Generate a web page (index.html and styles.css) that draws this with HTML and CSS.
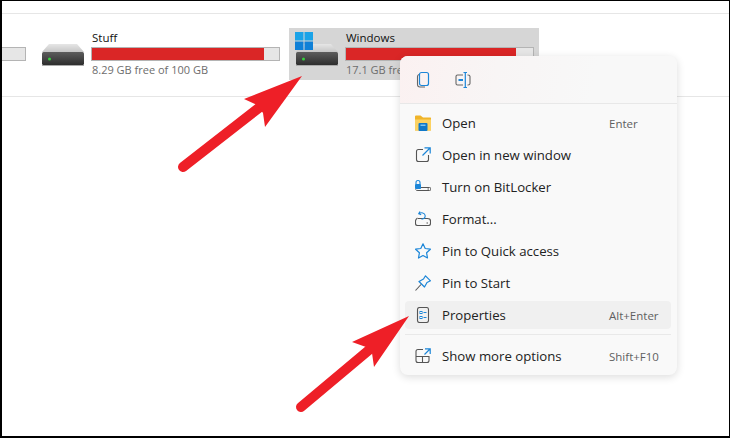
FILE: index.html
```html
<!DOCTYPE html>
<html>
  <head>
    <title>This PC</title>
    <link rel="stylesheet" href="styles.css">
  </head>
  <body>
    <div class="page">
      <div class="drives">
        <div class="cut-tile"><div class="bar"></div></div>

        <div class="tile">
          <svg class="drive-icon" width="42" height="22" viewBox="0 0 42 22">
            <use href="#drive"></use>
          </svg>
          <div class="info">
            <div class="name">Stuff</div>
            <div class="bar"><div class="used" style="width: 92%"></div></div>
            <div class="free">8.29 GB free of 100 GB</div>
          </div>
        </div>

        <div class="tile selected">
          <svg class="win-logo" width="18" height="18" viewBox="0 0 18 18">
            <rect width="8.5" height="8.5" fill="#1aa3e8"></rect>
            <rect x="9.5" width="8.5" height="8.5" fill="#1aa3e8"></rect>
            <rect y="9.5" width="8.5" height="8.5" fill="#0f80d7"></rect>
            <rect x="9.5" y="9.5" width="8.5" height="8.5" fill="#0f80d7"></rect>
          </svg>
          <svg class="drive-icon" width="42" height="22" viewBox="0 0 42 22">
            <use href="#drive"></use>
          </svg>
          <div class="info">
            <div class="name">Windows</div>
            <div class="bar"><div class="used" style="width: 91%"></div></div>
            <div class="free">17.1 GB free of 100 GB</div>
          </div>
        </div>
      </div>

      <div class="menu">
        <div class="menu-tools">
          <svg width="20" height="20" viewBox="0 0 20 20" fill="none">
            <path d="M6 4.5c-1 .3-1.500 1-1.500 2v8c0 1.600 1 2.500 2.500 2.500h5" stroke="#666" stroke-width="1.100"></path>
            <rect x="6.500" y="2.500" width="9" height="13" rx="2" stroke="#1c86d8" stroke-width="1.200"></rect>
          </svg>
          <svg width="20" height="20" viewBox="0 0 20 20" fill="none">
            <path d="M10 5H4.500Q3 5 3 6.500v7Q3 15 4.500 15H10M14.500 5h.5Q17 5 17 6.500v7q0 1.500-2 1.500h-.5" stroke="#666" stroke-width="1.100"></path>
            <path d="M5.500 10H10" stroke="#1c86d8" stroke-width="2"></path>
            <path d="M10.500 2.500h3.500M10.500 17.500h3.500M12.300 2.500v15" stroke="#1c86d8" stroke-width="1.200"></path>
          </svg>
        </div>

        <div class="menu-list">
          <div class="item">
            <svg width="16" height="16" viewBox="0 0 16 16">
              <path d="M0 1.500Q0 .5 1 .5h4.500L8 2.500h7.500q.5 0 .5.500V15.500H0z" fill="#f0b429"></path>
              <path d="M0 4.500h16v10q0 1-1 1H1q-1 0-1-1z" fill="#fcd262"></path>
              <rect x="3.500" y="8" width="9" height="8" rx="1" fill="#0f78c9"></rect>
              <rect x="5.500" y="9.500" width="5" height="1.500" fill="#7cc4f2"></rect>
            </svg>
            <span class="label">Open</span>
            <span class="keys">Enter</span>
          </div>
          <div class="item">
            <svg width="16" height="16" viewBox="0 0 16 16" fill="none">
              <path d="M8 2.500H3.500q-2 0-2 2v8q0 2 2 2h8q2 0 2-2V8" stroke="#555" stroke-width="1.100"></path>
              <path d="M9.500 .8h5.700v5.700M15 1L7.500 8.500" stroke="#1c86d8" stroke-width="1.200"></path>
            </svg>
            <span class="label">Open in new window</span>
          </div>
          <div class="item">
            <svg width="16" height="16" viewBox="0 0 16 16" fill="none">
              <path d="M1 5V3.500a2 2 0 0 1 4 0V5" stroke="#1c86d8" stroke-width="1.100"></path>
              <rect x="0" y="5" width="6" height="5" rx=".8" fill="#1c86d8"></rect>
              <path d="M6 8.500h8.500q1.500 0 1.500 1.500t-1.500 1.500H3q-2 0-2.500-1" stroke="#555" stroke-width="1"></path>
              <path d="M12.500 10h1.500" stroke="#555"></path>
            </svg>
            <span class="label">Turn on BitLocker</span>
          </div>
          <div class="item">
            <svg width="16" height="16" viewBox="0 0 16 16" fill="none">
              <path d="M3 7.500h9.500q3 0 3 2.500v2.500q0 2-2 2H2.500q-2 0-2-2V10q0-1.500 2-3" stroke="#555" stroke-width="1.100"></path>
              <path d="M5 .5 3.700 2.800l2.500 1M4 2.600c2-1.500 6-1 6.200 2.200.1 2-1.500 3.200-3.700 3.500" stroke="#1c86d8" stroke-width="1.100"></path>
              <path d="M11.500 12h1.500" stroke="#555"></path>
            </svg>
            <span class="label">Format...</span>
          </div>
          <div class="item">
            <svg width="16" height="16" viewBox="0 0 16 16" fill="none">
              <path d="M8 .8 10.200 5.500l5.200.7-3.800 3.600.9 5.200L8 12.500l-4.500 2.500.9-5.200L.6 6.200l5.200-.7z" stroke="#1c86d8" stroke-width="1.200" stroke-linejoin="round"></path>
            </svg>
            <span class="label">Pin to Quick access</span>
          </div>
          <div class="item">
            <svg width="16" height="16" viewBox="0 0 16 16" fill="none">
              <path d="M10.500 .8 15.500 5.800l-3.500 1.700-2.500 4.500-5.500-5.500 4.500-2.500z" stroke="#1c86d8" stroke-width="1.200" stroke-linejoin="round"></path>
              <path d="M6 9.500.5 15.500" stroke="#555" stroke-width="1.100"></path>
            </svg>
            <span class="label">Pin to Start</span>
          </div>
          <div class="item active">
            <svg width="16" height="16" viewBox="0 0 16 16" fill="none">
              <rect x="2.500" y=".5" width="11" height="15" rx="2" stroke="#555" stroke-width="1.100"></rect>
              <rect x="5" y="4.500" width="2" height="2" stroke="#1c86d8"></rect>
              <rect x="5" y="9.500" width="2" height="2" stroke="#1c86d8"></rect>
              <path d="M8.500 5.500h3M8.500 10.500h3" stroke="#1c86d8"></path>
            </svg>
            <span class="label">Properties</span>
            <span class="keys">Alt+Enter</span>
          </div>
          <div class="menu-sep"></div>
          <div class="item">
            <svg width="16" height="16" viewBox="0 0 16 16" fill="none">
              <path d="M8 1.500H3q-2 0-2 2v9q0 2 2 2h9q2 0 2-2V8.500H7.500v6M1 8.500h6.500" stroke="#555" stroke-width="1.100"></path>
              <path d="M10 .8h5.200V6M15 1 9.500 6.500" stroke="#1c86d8" stroke-width="1.200"></path>
            </svg>
            <span class="label">Show more options</span>
            <span class="keys">Shift+F10</span>
          </div>
        </div>
      </div>

      <svg class="arrows" width="730" height="438" viewBox="0 0 730 438">
        <path d="M183 167 260 107" stroke="#ee1f27" stroke-width="10" stroke-linecap="round"></path>
        <polygon points="302,76 244,99 257,105 263,113 265,127" fill="#ee1f27"></polygon>
        <path d="M301 407 369 350" stroke="#ee1f27" stroke-width="10" stroke-linecap="round"></path>
        <polygon points="409,316 352,342 366,347 372,353 374,367" fill="#ee1f27"></polygon>
      </svg>

      <svg width="0" height="0" class="defs">
        <defs>
          <linearGradient id="drive-top" x1="0" y1="0" x2="0" y2="1">
            <stop offset="0" stop-color="#e6e6e6"></stop>
            <stop offset="1" stop-color="#c6c6c6"></stop>
          </linearGradient>
          <linearGradient id="drive-body" x1="0" y1="0" x2="0" y2="1">
            <stop offset="0" stop-color="#5c5c5c"></stop>
            <stop offset="1" stop-color="#2e2e2e"></stop>
          </linearGradient>
          <g id="drive">
            <polygon points="7,0 35,0 42,8 0,8" fill="url(#drive-top)"></polygon>
            <rect x="0" y="8" width="42" height="13" rx="1.500" fill="url(#drive-body)"></rect>
            <rect x="0" y="21" width="42" height="1" fill="#aaa"></rect>
            <rect x="6" y="13.500" width="3" height="3" rx="1.500" fill="#35d13c"></rect>
          </g>
        </defs>
      </svg>
    </div>
  </body>
</html>
```

FILE: styles.css
```css
* {
  box-sizing: border-box;
}

body {
  margin: 0;
  background-color: #fff;
}

.page {
  position: relative;
  width: 730px;
  height: 438px;
  overflow: hidden;
  background-color: #fff;
  border: solid #000;
  border-width: 1px 1px 2px 2px;
  font-family: "Open Sans", "Noto Sans", sans-serif;
  color: #1b1b1b;
}

.defs {
  position: absolute;
}

.drives {
  display: flex;
  margin-top: 12px;
  padding-top: 14px;
  height: 84px;
  border-top: 1px solid #e6e6e6;
  border-bottom: 1px solid #e6e6e6;
}

.cut-tile {
  width: 24px;
  margin-right: 9px;
  padding-top: 19px;
}

.cut-tile .bar {
  border-left: none;
}

.tile {
  position: relative;
  display: flex;
  width: 250px;
  height: 52px;
  margin-right: 4px;
  padding-left: 7px;
}

.tile.selected {
  background-color: #d6d6d6;
}

.drive-icon {
  flex: none;
  margin-top: 16px;
}

.win-logo {
  position: absolute;
  left: 6px;
  top: 4px;
}

.info {
  width: 189px;
  margin-left: 7px;
}

.name {
  height: 19px;
  padding: 2px 0 0 1px;
  font-size: 11.500px;
  line-height: 15px;
  color: #111;
}

.bar {
  height: 14px;
  background-color: #e6e6e6;
  border: 1px solid #b4b4b4;
}

.used {
  height: 100%;
  background-color: #da2626;
}

.free {
  padding: 1px 0 0 1px;
  font-size: 11px;
  line-height: 15px;
  color: #6d6d6d;
}

.menu {
  position: absolute;
  left: 398px;
  top: 55px;
  width: 277px;
  height: 319px;
  background-color: #f9f9f9;
  border-radius: 8px;
  box-shadow: 0 2px 8px rgba(0, 0, 0, 0.14);
}

.menu-tools {
  display: flex;
  gap: 20px;
  height: 48px;
  padding: 14px 0 0 13px;
  border-bottom: 1px solid #e8e8e8;
  border-radius: 8px 8px 0 0;
  background: linear-gradient(100deg, #fbf1f1, #f8f5f5 35%, #f8f8f8 70%);
}

.menu-list {
  padding: 3px 6px 0 5px;
}

.item {
  display: flex;
  align-items: center;
  height: 32px;
  padding-left: 10px;
  border-radius: 4px;
  font-size: 13.200px;
  color: #222;
}

.item svg {
  flex: none;
}

.item.active {
  height: 28px;
  margin: 2px 0;
  background-color: #f0f0f0;
}

.label {
  margin-left: 11px;
}

.keys {
  position: absolute;
  left: 209px;
  font-size: 11.500px;
  color: #5f5f5f;
}

.menu-sep {
  height: 1px;
  margin: 5px 0;
  background-color: #e9e9e9;
}

.arrows {
  position: absolute;
  left: -2px;
  top: -1px;
}
```
